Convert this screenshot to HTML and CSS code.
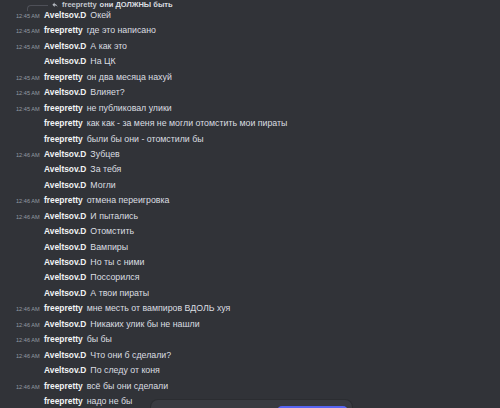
FILE: index.html
```html
<!DOCTYPE html>
<html lang="ru">
<head>
    <meta charset="UTF-8">
    <meta name="viewport" content="width=device-width, initial-scale=1.0">
    <title>Чат</title>
    <link rel="stylesheet" href="styles.css">
</head>
<body>
    <div class="chat">
        <div class="reply">
            <span class="reply-spine"></span>
            <svg class="reply-icon" width="6" height="6" viewBox="0 0 6 6">
                <path d="M2.6 0.6 L0.4 2.8 L2.6 5 L2.6 3.6 C4 3.6 5 4 5.6 5.2 C5.4 3.4 4.4 2.2 2.6 2 Z" fill="#b5bac1"/>
            </svg>
            <span class="reply-name">freepretty</span>
            <span class="reply-text">они ДОЛЖНЫ быть</span>
        </div>

        <div class="msg"><span class="time">12:45 AM</span><span class="name">Aveltsov.D</span><span class="text">Окей</span></div>
        <div class="msg"><span class="time">12:45 AM</span><span class="name">freepretty</span><span class="text">где это написано</span></div>
        <div class="msg"><span class="time">12:45 AM</span><span class="name">Aveltsov.D</span><span class="text">А как это</span></div>
        <div class="msg"><span class="time"></span><span class="name">Aveltsov.D</span><span class="text">На ЦК</span></div>
        <div class="msg"><span class="time">12:45 AM</span><span class="name">freepretty</span><span class="text">он два месяца нахуй</span></div>
        <div class="msg"><span class="time">12:45 AM</span><span class="name">Aveltsov.D</span><span class="text">Влияет?</span></div>
        <div class="msg"><span class="time">12:45 AM</span><span class="name">freepretty</span><span class="text">не публиковал улики</span></div>
        <div class="msg"><span class="time"></span><span class="name">freepretty</span><span class="text">как как - за меня не могли отомстить мои пираты</span></div>
        <div class="msg"><span class="time"></span><span class="name">freepretty</span><span class="text">были бы они - отомстили бы</span></div>
        <div class="msg"><span class="time">12:46 AM</span><span class="name">Aveltsov.D</span><span class="text">Зубцев</span></div>
        <div class="msg"><span class="time"></span><span class="name">Aveltsov.D</span><span class="text">За тебя</span></div>
        <div class="msg"><span class="time"></span><span class="name">Aveltsov.D</span><span class="text">Могли</span></div>
        <div class="msg"><span class="time">12:46 AM</span><span class="name">freepretty</span><span class="text">отмена переигровка</span></div>
        <div class="msg"><span class="time">12:46 AM</span><span class="name">Aveltsov.D</span><span class="text">И пытались</span></div>
        <div class="msg"><span class="time"></span><span class="name">Aveltsov.D</span><span class="text">Отомстить</span></div>
        <div class="msg"><span class="time"></span><span class="name">Aveltsov.D</span><span class="text">Вампиры</span></div>
        <div class="msg"><span class="time"></span><span class="name">Aveltsov.D</span><span class="text">Но ты с ними</span></div>
        <div class="msg"><span class="time"></span><span class="name">Aveltsov.D</span><span class="text">Поссорился</span></div>
        <div class="msg"><span class="time"></span><span class="name">Aveltsov.D</span><span class="text">А твои пираты</span></div>
        <div class="msg"><span class="time">12:46 AM</span><span class="name">freepretty</span><span class="text">мне месть от вампиров ВДОЛЬ хуя</span></div>
        <div class="msg"><span class="time">12:46 AM</span><span class="name">Aveltsov.D</span><span class="text">Никаких улик бы не нашли</span></div>
        <div class="msg"><span class="time">12:46 AM</span><span class="name">freepretty</span><span class="text">бы бы</span></div>
        <div class="msg"><span class="time">12:46 AM</span><span class="name">Aveltsov.D</span><span class="text">Что они б сделали?</span></div>
        <div class="msg"><span class="time"></span><span class="name">Aveltsov.D</span><span class="text">По следу от коня</span></div>
        <div class="msg"><span class="time">12:46 AM</span><span class="name">freepretty</span><span class="text">всё бы они сделали</span></div>
        <div class="msg"><span class="time"></span><span class="name">freepretty</span><span class="text">надо не бы</span></div>
    </div>

    <!-- всплывающая панель внизу -->
    <div class="popup">
        <div class="popup-btn"></div>
    </div>
</body>
</html>
```

FILE: styles.css
```css
* {
    margin: 0;
    padding: 0;
    box-sizing: border-box;
}

body {
    font-family: "Liberation Sans", Arial, sans-serif;
    background: #313338;
    width: 500px;
    height: 408px;
    overflow: hidden;
    position: relative;
}

.chat {
    height: 408px;
    overflow: hidden;
    padding-left: 16px;
}

/* строка ответа */
.reply {
    display: flex;
    align-items: center;
    height: 8px;
    margin-top: 1px;
    margin-bottom: -1px;
    font-size: 7.5px;
    line-height: 8px;
}

.reply-spine {
    width: 21px;
    height: 6px;
    margin: 6px 0 0 11px;
    border-left: 1px solid #4e5058;
    border-top: 1px solid #4e5058;
    border-top-left-radius: 4px;
}

.reply-icon {
    margin: 0 4px 0 4px;
}

.reply-name {
    color: #c4c9ce;
    font-weight: bold;
    margin-right: 3px;
}

.reply-text {
    color: #dbdee1;
    font-weight: bold;
}

.msg {
    display: flex;
    align-items: baseline;
    height: 15.44px;
    line-height: 15.44px;
    white-space: nowrap;
}

.time {
    width: 28px;
    font-size: 5.6px;
    color: #949ba4;
}

.name {
    font-size: 8.4px;
    font-weight: bold;
    color: #f2f3f5;
}

.text {
    margin-left: 4px;
    font-size: 8.8px;
    color: #dbdee1;
}

.popup {
    position: absolute;
    left: 150px;
    top: 399px;
    width: 203px;
    height: 9px;
    overflow: hidden;
    background: #393b41;
    border: 1px solid #2b2d31;
    border-bottom: none;
    border-radius: 8px 8px 0 0;
}

.popup-btn {
    position: absolute;
    left: 126px;
    top: 6px;
    width: 71px;
    height: 8px;
    background: #5865f2;
    border-radius: 5px 5px 0 0;
}
```
